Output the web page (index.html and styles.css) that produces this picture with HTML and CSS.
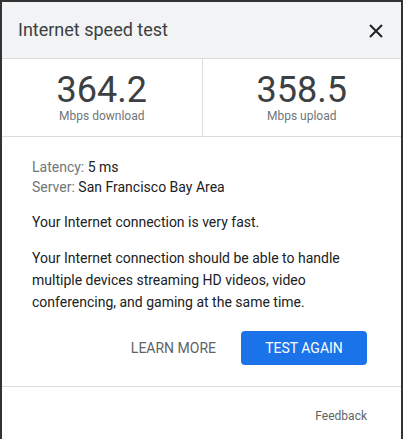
FILE: index.html
```html
<!DOCTYPE html>
<html>
<head>
<meta charset="utf-8">
<link rel="stylesheet" href="styles.css">
</head>
<body>
<div class="dialog">
  <div class="header">
    <div class="title">Internet speed test</div>
    <button class="close" aria-label="Close">
      <svg width="14" height="14" viewBox="0 0 14 14"><path d="M1 1L13 13M13 1L1 13" stroke="#202124" stroke-width="2" fill="none"/></svg>
    </button>
  </div>
  <div class="stats">
    <div class="stat">
      <div class="num">364.2</div>
      <div class="unit">Mbps download</div>
    </div>
    <div class="stat">
      <div class="num">358.5</div>
      <div class="unit">Mbps upload</div>
    </div>
  </div>
  <div class="body">
    <div class="meta">
      <div><span class="label">Latency:</span> 5 ms</div>
      <div><span class="label">Server:</span> San Francisco Bay Area</div>
    </div>
    <p class="para">Your Internet connection is very fast.</p>
    <p class="para">Your Internet connection should be able to handle multiple devices streaming HD videos, video conferencing, and gaming at the same time.</p>
    <div class="actions">
      <button class="btn-text">LEARN MORE</button>
      <button class="btn-primary">TEST AGAIN</button>
    </div>
  </div>
  <div class="footer">
    <span class="feedback">Feedback</span>
  </div>
</div>
</body>
</html>
```

FILE: styles.css
```css
html, body {
  margin: 0;
  padding: 0;
  background: #fff;
}
body {
  font-family: Roboto, "Liberation Sans", sans-serif;
  color: #202124;
}
.dialog {
  width: 403px;
  height: 439px;
  box-sizing: border-box;
  border-top: 2px solid #333333;
  border-left: 2px solid #333333;
  border-right: 2px solid #333333;
  background: #fff;
}
.header {
  height: 56px;
  background: #f1f3f4;
  border-bottom: 1px solid #dadce0;
  display: flex;
  align-items: center;
  justify-content: space-between;
  padding: 0 18px 0 16px;
}
.title {
  font-size: 18px;
  color: #3c4043;
  padding-bottom: 1px;
}
.close {
  border: 0;
  background: transparent;
  padding: 0;
  width: 14px;
  height: 14px;
  display: flex;
  margin-top: 1px;
}
.stats {
  display: grid;
  grid-template-columns: 1fr 1fr;
  border-bottom: 1px solid #dadce0;
}
.stat {
  text-align: center;
  padding: 13px 0 13px;
}
.stat + .stat {
  border-left: 1px solid #dadce0;
}
.num {
  font-size: 36px;
  line-height: 37px;
  color: #3c4043;
}
.unit {
  font-size: 12px;
  line-height: 14px;
  color: #70757a;
}
.body {
  padding: 20px 34px 21px 30px;
  border-bottom: 1px solid #dadce0;
}
.meta {
  font-size: 14px;
  line-height: 20px;
}
.label {
  color: #70757a;
}
.para {
  margin: 14px 0 0;
  font-size: 14px;
  line-height: 22px;
}
.actions {
  display: flex;
  justify-content: flex-end;
  align-items: center;
  gap: 25px;
  margin-top: 18px;
}
.btn-text {
  border: 0;
  background: transparent;
  font-family: inherit;
  font-size: 14px;
  color: #5f6368;
  padding: 0;
}
.btn-primary {
  border: 0;
  background: #1a73e8;
  color: #fff;
  font-family: inherit;
  font-size: 14px;
  width: 126px;
  height: 34px;
  border-radius: 4px;
  padding: 0;
}
.footer {
  display: flex;
  justify-content: flex-end;
  padding: 21px 34px 0 0;
}
.feedback {
  font-size: 12px;
  line-height: 16px;
  color: #5f6368;
}
```
